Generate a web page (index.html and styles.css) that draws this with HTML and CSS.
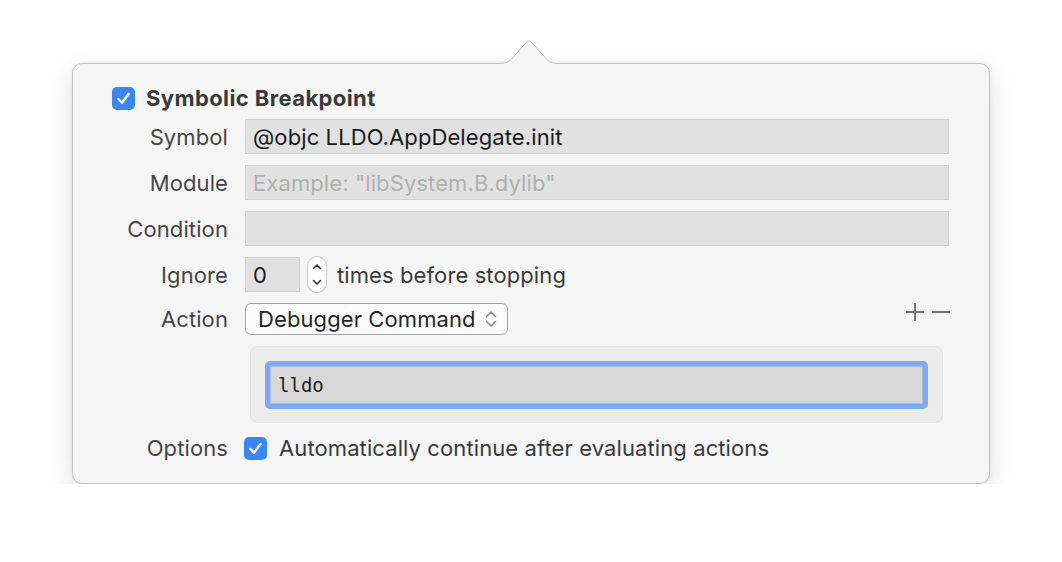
FILE: index.html
```html
<!DOCTYPE html>
<html>
<head>
<meta charset="utf-8">
<link rel="stylesheet" href="styles.css">
</head>
<body>
<div class="page">
  <div class="popover">
    <svg class="arrow" width="60" height="28" viewBox="0 0 60 28">
      <path d="M0,25.5 C6,25.5 9,24.5 12,21.5 L27.2,4.5 Q30,1.2 32.8,4.5 L48,21.5 C51,24.5 54,25.5 60,25.5 L60,28 L0,28 Z" fill="#f5f5f5"/>
      <path d="M0,25.5 C6,25.5 9,24.5 12,21.5 L27.2,4.5 Q30,1.2 32.8,4.5 L48,21.5 C51,24.5 54,25.5 60,25.5" fill="none" stroke="#c4c4c4" stroke-width="1"/>
    </svg>
    <div class="title-row">
      <span class="check"><svg width="23" height="23" viewBox="0 0 23 23"><path d="M6.5,12 L10,15.8 L16.5,7" fill="none" stroke="#fff" stroke-width="2.4" stroke-linecap="round" stroke-linejoin="round"/></svg></span>
      <span class="title">Symbolic Breakpoint</span>
    </div>
    <div class="form">
      <div class="label">Symbol</div>
      <div class="field">@objc LLDO.AppDelegate.init</div>

      <div class="label">Module</div>
      <div class="field placeholder">Example: "libSystem.B.dylib"</div>

      <div class="label">Condition</div>
      <div class="field"></div>

      <div class="label">Ignore</div>
      <div class="ignore-row">
        <div class="field num">0</div>
        <div class="stepper">
          <svg width="18" height="35" viewBox="0 0 18 35">
            <path d="M5.5,11.5 L9,8 L12.5,11.5" fill="none" stroke="#333" stroke-width="1.6" stroke-linecap="round" stroke-linejoin="round"/>
            <path d="M5.5,23.5 L9,27 L12.5,23.5" fill="none" stroke="#333" stroke-width="1.6" stroke-linecap="round" stroke-linejoin="round"/>
          </svg>
        </div>
        <span class="after">times before stopping</span>
      </div>

      <div class="label">Action</div>
      <div class="action-row">
        <div class="popup">
          <span>Debugger Command</span>
          <svg width="14" height="20" viewBox="0 0 14 20">
            <path d="M2.5,7.5 L7,3 L11.5,7.5" fill="none" stroke="#8a8a8a" stroke-width="1.5" stroke-linecap="round" stroke-linejoin="round"/>
            <path d="M2.5,12.5 L7,17 L11.5,12.5" fill="none" stroke="#8a8a8a" stroke-width="1.5" stroke-linecap="round" stroke-linejoin="round"/>
          </svg>
        </div>
        <div class="pm">
          <svg width="46" height="20" viewBox="0 0 46 20">
            <path d="M10,1 L10,19 M1,10 L19,10" stroke="#727272" stroke-width="2"/>
            <path d="M27,10 L45,10" stroke="#727272" stroke-width="2"/>
          </svg>
        </div>
      </div>

      <div class="label"></div>
      <div class="cmd-box">
        <div class="ring">
          <div class="cmd-field">lldo</div>
        </div>
      </div>

      <div class="label">Options</div>
      <div class="opt-row">
        <span class="check"><svg width="23" height="23" viewBox="0 0 23 23"><path d="M6.5,12 L10,15.8 L16.5,7" fill="none" stroke="#fff" stroke-width="2.4" stroke-linecap="round" stroke-linejoin="round"/></svg></span>
        <span class="opt-text">Automatically continue after evaluating actions</span>
      </div>
    </div>
  </div>
</div>
</body>
</html>
```

FILE: styles.css
```css
html, body {
  margin: 0;
  background: #ffffff;
}

body {
  font-family: Inter, "Liberation Sans", Arial, sans-serif;
  font-size: 22px;
  letter-spacing: 0.1px;
  color: #1e1e1e;
}

.page {
  padding: 63px 0 0 72px;
}

.popover {
  position: relative;
  width: 918px;
  box-sizing: border-box;
  background: #f5f5f5;
  border: 1px solid #c2c2c2;
  border-radius: 10px;
  padding: 22px 40px 22px 0;
  box-shadow: 0 8px 26px rgba(0, 0, 0, 0.13), 0 0 6px rgba(0, 0, 0, 0.05);
}

.arrow {
  position: absolute;
  left: 426px;
  top: -26px;
  display: block;
}

.title-row {
  display: flex;
  align-items: center;
  gap: 11px;
  margin-left: 39px;
  height: 24px;
}

.check {
  width: 23px;
  height: 23px;
  border-radius: 5px;
  background: #3a86f6;
  display: flex;
  flex: none;
}

.title {
  font-weight: 700;
  letter-spacing: 0.4px;
  color: #3a3a3a;
}

.form {
  display: grid;
  grid-template-columns: 155px 704px;
  column-gap: 17px;
  row-gap: 11px;
  margin-top: 9px;
  align-items: center;
}

.label {
  text-align: right;
  color: #464646;
}

.field {
  height: 35px;
  box-sizing: border-box;
  background: #e1e1e1;
  border: 1px solid #d0d0d0;
  padding: 0 7px;
  display: flex;
  align-items: center;
  color: #1a1a1a;
}

.placeholder {
  color: #b0b0b0;
}

.ignore-row {
  display: flex;
  align-items: center;
}

.field.num {
  width: 55px;
}

.stepper {
  margin-left: 8px;
  width: 18px;
  height: 35px;
  box-sizing: border-box;
  background: #ffffff;
  border-radius: 9px;
  box-shadow: 0 0 0 1px #c8c8c8, 0 1px 1px rgba(0, 0, 0, 0.12);
  display: flex;
}

.after {
  margin-left: 11px;
  color: #3a3a3a;
}

.action-row {
  display: flex;
  align-items: center;
  justify-content: space-between;
}

.popup {
  width: 263px;
  height: 32px;
  box-sizing: border-box;
  border: 1px solid #a3a3a3;
  border-radius: 6px;
  background: #fbfbfb;
  display: flex;
  align-items: center;
  justify-content: space-between;
  padding: 0 9px 0 12px;
  color: #262626;
}

.popup svg {
  display: block;
}

.pm {
  display: flex;
  margin-right: -2px;
  margin-top: -14px;
}

.cmd-box {
  margin: 0 6px 0 5px;
  height: 77px;
  box-sizing: border-box;
  background: #ebebeb;
  border: 1px solid #e4e4e4;
  border-radius: 7px;
  padding: 14px 14px 13px 14px;
  display: flex;
}

.ring {
  flex: 1;
  border: 5px solid #7ea9ee;
  border-radius: 5px;
  display: flex;
}

.cmd-field {
  flex: 1;
  background: #d7d7d7;
  border: 1px solid #a8bcdf;
  padding: 0 7px;
  display: flex;
  align-items: center;
  font-family: "DejaVu Sans Mono", "Liberation Mono", monospace;
  font-size: 19px;
  letter-spacing: 0;
  color: #1e1e1e;
}

.opt-row {
  display: flex;
  align-items: center;
  gap: 12px;
  margin-top: 1px;
  margin-left: -1px;
}

.opt-text {
  color: #3a3a3a;
}
```
